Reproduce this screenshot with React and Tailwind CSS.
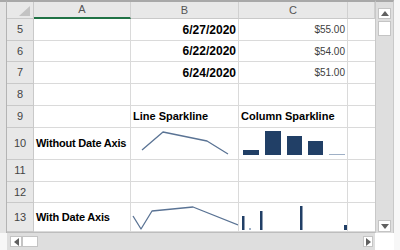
import React from "react";

const cols = [
  { key: "A", w: "w-[97px]" },
  { key: "B", w: "w-[108px]" },
  { key: "C", w: "w-[109px]" },
  { key: "D", w: "w-[27px]" },
];

const rows = [
  { n: 5, h: "h-[22px]", b: "6/27/2020", c: "$55.00" },
  { n: 6, h: "h-[21px]", b: "6/22/2020", c: "$54.00" },
  { n: 7, h: "h-[22px]", b: "6/24/2020", c: "$51.00" },
  { n: 8, h: "h-[22px]" },
  { n: 9, h: "h-[22px]", b: "Line Sparkline", c: "Column Sparkline", head: true },
  { n: 10, h: "h-[32px]", a: "Without Date Axis", spark: "plain" },
  { n: 11, h: "h-[22px]" },
  { n: 12, h: "h-[21px]" },
  { n: 13, h: "h-[29px]", a: "With Date Axis", spark: "date" },
];

const LINE = "#5a7394";
const BAR = "#213f66";

function LineSpark({ points, h }) {
  return (
    <svg width="107" height={h} className="absolute left-0 top-0">
      <polyline points={points} fill="none" stroke={LINE} strokeWidth="1.3" strokeLinejoin="round" />
    </svg>
  );
}

function ColumnSpark({ bars, h }) {
  return (
    <svg width="108" height={h} className="absolute left-0 top-0">
      {bars.map(([x, y, w, bh, light], i) => (
        <rect key={i} x={x} y={y} width={w} height={bh} fill={light ? "#9fb0c6" : BAR} />
      ))}
    </svg>
  );
}

function Sparks({ kind }) {
  if (kind === "plain") {
    return [
      <LineSpark key="l" h={31} points="11,22 32,4 76,13 97,26" />,
      <ColumnSpark
        key="c"
        h={31}
        bars={[
          [4, 22, 16, 5],
          [26, 3, 16, 24],
          [48, 8, 15, 19],
          [69, 13, 15, 14],
          [90, 26, 16, 1, true],
        ]}
      />,
    ];
  }
  return [
    <LineSpark key="l" h={28} points="2,13 10,26 21,8 62,4 107,22" />,
    <ColumnSpark
      key="c"
      h={28}
      bars={[
        [3, 13, 2.5, 14],
        [10, 25, 2, 2, true],
        [21, 8, 2.5, 19],
        [61, 3, 2.5, 24],
        [105, 22, 3, 5],
      ]}
    />,
  ];
}

function UpArrow() {
  return (
    <svg width="8" height="5"><polygon points="0,5 8,5 4,0" fill="#606060" /></svg>
  );
}
function DownArrow() {
  return (
    <svg width="8" height="5"><polygon points="0,0 8,0 4,5" fill="#606060" /></svg>
  );
}
function LeftArrow() {
  return (
    <svg width="5" height="8"><polygon points="5,0 5,8 0,4" fill="#606060" /></svg>
  );
}
function RightArrow() {
  return (
    <svg width="5" height="8"><polygon points="0,0 0,8 5,4" fill="#606060" /></svg>
  );
}

export default function App() {
  const sparkCells = (r) => {
    const [line, col] = Sparks({ kind: r.spark });
    return { line, col };
  };

  return (
    <div className="w-[400px] h-[250px] flex bg-[#f7f7f7] overflow-hidden font-['Liberation_Sans',Arial,sans-serif] text-black">
      {/* LEFT FRAME */}
      <div className="w-[7px] h-[233px] bg-[#e4e4e4] border-r border-[#b4b4b4] border-t-2 border-t-[#a8a8a8]" />

      <div className="w-[368px] flex flex-col">
        {/* GRID */}
        <div className="h-[233px] bg-white border-t-2 border-[#a8a8a8] border-b border-b-[#bdbdbd] flex flex-col">
          {/* COLUMN HEADERS */}
          <div className="h-[17px] flex bg-[#e8e8e8] text-[11px] text-[#555]">
            <div className="w-[27px] border-r border-b border-[#c9c9c9] relative">
              <svg width="11" height="10" className="absolute right-[3px] bottom-[2px]">
                <polygon points="11,0 11,10 0,10" fill="#c3c3c3" />
              </svg>
            </div>
            {cols.map((c) => (
              <div
                key={c.key}
                className={`${c.w} border-r border-[#d0d0d0] flex items-center justify-center ${
                  c.key === "A" ? "border-b-2 border-b-[#217346]" : "border-b border-b-[#c9c9c9]"
                }`}
              >
                {c.key === "D" ? "" : c.key}
              </div>
            ))}
          </div>

          {/* ROWS */}
          {rows.map((r) => {
            const s = r.spark ? sparkCells(r) : null;
            return (
              <div key={r.n} className={`${r.h} flex`}>
                <div className="w-[27px] bg-[#e8e8e8] border-r border-b border-[#c9c9c9] flex items-center justify-center text-[11px] text-[#444]">
                  {r.n}
                </div>
                <div className="w-[97px] border-r border-b border-[#dadada] flex items-center pl-[2px] text-[11px] font-bold tracking-[-0.2px] whitespace-nowrap">
                  {r.a}
                </div>
                <div
                  className={`w-[108px] border-r border-b border-[#dadada] flex items-center relative whitespace-nowrap font-bold ${
                    r.head ? "pl-[2px] text-[11px]" : "justify-end pr-[2px] text-[12px]"
                  }`}
                >
                  {r.b}
                  {s && s.line}
                </div>
                <div
                  className={`w-[109px] border-r border-b border-[#dadada] flex items-center relative whitespace-nowrap ${
                    r.head ? "pl-[2px] text-[11px] font-bold" : "justify-end pr-[2px] text-[10px] text-[#404040]"
                  }`}
                >
                  {r.c}
                  {s && s.col}
                </div>
                <div className="w-[27px] border-b border-[#dadada]" />
              </div>
            );
          })}
        </div>

        {/* HORIZONTAL SCROLLBAR */}
        <div className="h-[17px] bg-[#dedede] flex items-center pl-[3px] pr-[2px]">
          <div className="w-[12px] h-[11px] bg-white border border-[#c4c4c4] flex items-center justify-center">
            <LeftArrow />
          </div>
          <div className="w-[16px] h-[11px] bg-white border border-[#c4c4c4]" />
          <div className="flex-1" />
          <div className="w-[10px] h-[11px] bg-white border border-[#c4c4c4] flex items-center justify-center">
            <RightArrow />
          </div>
        </div>
      </div>

      {/* VERTICAL SCROLLBAR */}
      <div className="w-[19px] flex flex-col">
        <div className="h-[233px] bg-[#dedede] border-l border-r border-[#c8c8c8] border-t-2 border-t-[#a8a8a8] flex flex-col items-center pt-[6px] pb-[1px]">
          <div className="w-[13px] h-[11px] bg-white border border-[#c4c4c4] flex items-center justify-center">
            <UpArrow />
          </div>
          <div className="w-[13px] h-[15px] bg-white border border-[#c4c4c4] mt-[2px]" />
          <div className="flex-1" />
          <div className="w-[13px] h-[12px] bg-white border border-[#c4c4c4] flex items-center justify-center">
            <DownArrow />
          </div>
        </div>
        <div className="h-[17px] bg-white" />
      </div>

      <div className="w-[6px] bg-[#f7f7f7]" />
    </div>
  );
}
